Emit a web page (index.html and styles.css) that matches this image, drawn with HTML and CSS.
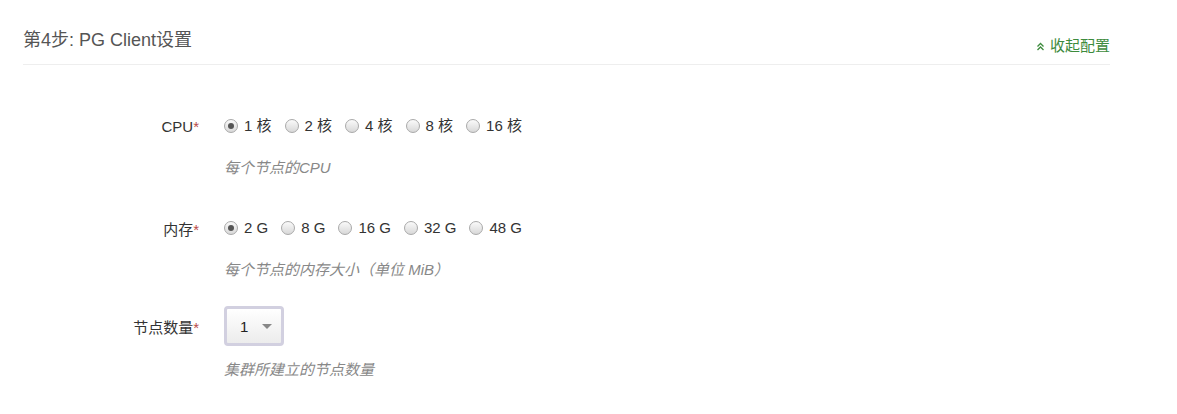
FILE: index.html
```html
<!DOCTYPE html>
<html lang="zh-CN">
<head>
<meta charset="utf-8">
<title>PG Client设置</title>
<link rel="stylesheet" href="styles.css">
</head>
<body>
<div class="section">
  <div class="section-header">
    <h3 class="section-title">第4步: PG Client设置</h3>
    <a class="collapse-link" href="#">
      <svg class="chev" width="9" height="9" viewBox="0 0 9 9"><path d="M1.5 4.5 L4.5 1.5 L7.5 4.5 M1.5 8 L4.5 5 L7.5 8" fill="none" stroke="#3d8b3d" stroke-width="1.3"/></svg>收起配置</a>
  </div>
  <div class="form">
    <div class="form-group">
      <div class="control-line">
        <label class="field-label">CPU<span class="req">*</span></label>
        <div class="options">
          <span class="opt"><span class="radio checked"></span>1 核</span>
          <span class="opt"><span class="radio"></span>2 核</span>
          <span class="opt"><span class="radio"></span>4 核</span>
          <span class="opt"><span class="radio"></span>8 核</span>
          <span class="opt"><span class="radio"></span>16 核</span>
        </div>
      </div>
      <div class="help">每个节点的CPU</div>
    </div>
    <div class="form-group">
      <div class="control-line">
        <label class="field-label">内存<span class="req">*</span></label>
        <div class="options">
          <span class="opt"><span class="radio checked"></span>2 G</span>
          <span class="opt"><span class="radio"></span>8 G</span>
          <span class="opt"><span class="radio"></span>16 G</span>
          <span class="opt"><span class="radio"></span>32 G</span>
          <span class="opt"><span class="radio"></span>48 G</span>
        </div>
      </div>
      <div class="help">每个节点的内存大小（单位 MiB）</div>
    </div>
    <div class="form-group select-group">
      <div class="control-line tall">
        <label class="field-label">节点数量<span class="req">*</span></label>
        <div class="select"><span class="select-value">1</span><span class="caret"></span></div>
      </div>
      <div class="help">集群所建立的节点数量</div>
    </div>
  </div>
</div>
</body>
</html>
```
FILE: styles.css
```css
html, body {
  margin: 0;
  padding: 0;
  background: #fff;
  font-family: "Liberation Sans", "Noto Sans CJK SC", sans-serif;
  font-size: 15px;
  color: #333;
}
.section {
  width: 1087px;
  margin-left: 23px;
}
.section-header {
  display: flex;
  justify-content: space-between;
  align-items: flex-start;
  padding-top: 29px;
  height: 35px;
  border-bottom: 1px solid #eee;
}
.section-title {
  margin: 0;
  font-size: 18px;
  line-height: 22px;
  font-weight: normal;
  color: #555;
}
.collapse-link {
  margin-top: 8px;
  font-size: 15px;
  line-height: 18px;
  color: #3d8b3d;
  text-decoration: none;
  display: flex;
  align-items: center;
  gap: 5px;
}
.form {
  padding-top: 44px;
}
.form-group {
  margin-bottom: 33px;
}
.select-group {
  margin-top: -7px;
}
.control-line {
  display: flex;
  align-items: center;
  height: 34px;
}
.control-line.tall {
  height: 40px;
}
.field-label {
  width: 176px;
  text-align: right;
  padding-right: 25px;
  color: #333;
}
.req {
  color: #b94a48;
}
.options {
  display: flex;
  align-items: center;
}
.opt {
  display: flex;
  align-items: center;
  margin-right: 13px;
  line-height: 20px;
}
.radio {
  width: 12px;
  height: 12px;
  border: 1px solid #a9a9a9;
  border-radius: 50%;
  background: linear-gradient(#fafafa, #d8d8d8);
  margin-right: 6px;
  position: relative;
  box-sizing: content-box;
}
.radio.checked::after {
  content: "";
  position: absolute;
  left: 3px;
  top: 3px;
  width: 6px;
  height: 6px;
  border-radius: 50%;
  background: #555;
}
.help {
  margin-top: 15px;
  padding-left: 201px;
  font-style: italic;
  color: #888;
  line-height: 20px;
}
.select-group .help {
  margin-top: 14px;
}
.select {
  height: 34px;
  border: 3px solid #d2d0e0;
  border-radius: 4px;
  background: linear-gradient(#fff, #ececec);
  display: flex;
  align-items: center;
  padding-left: 13px;
  box-sizing: content-box;
  width: 41px;
}
.select-value {
  font-size: 15px;
  color: #222;
}
.caret {
  margin-left: 14px;
  width: 0;
  height: 0;
  border-left: 5px solid transparent;
  border-right: 5px solid transparent;
  border-top: 5px solid #888;
}
```
